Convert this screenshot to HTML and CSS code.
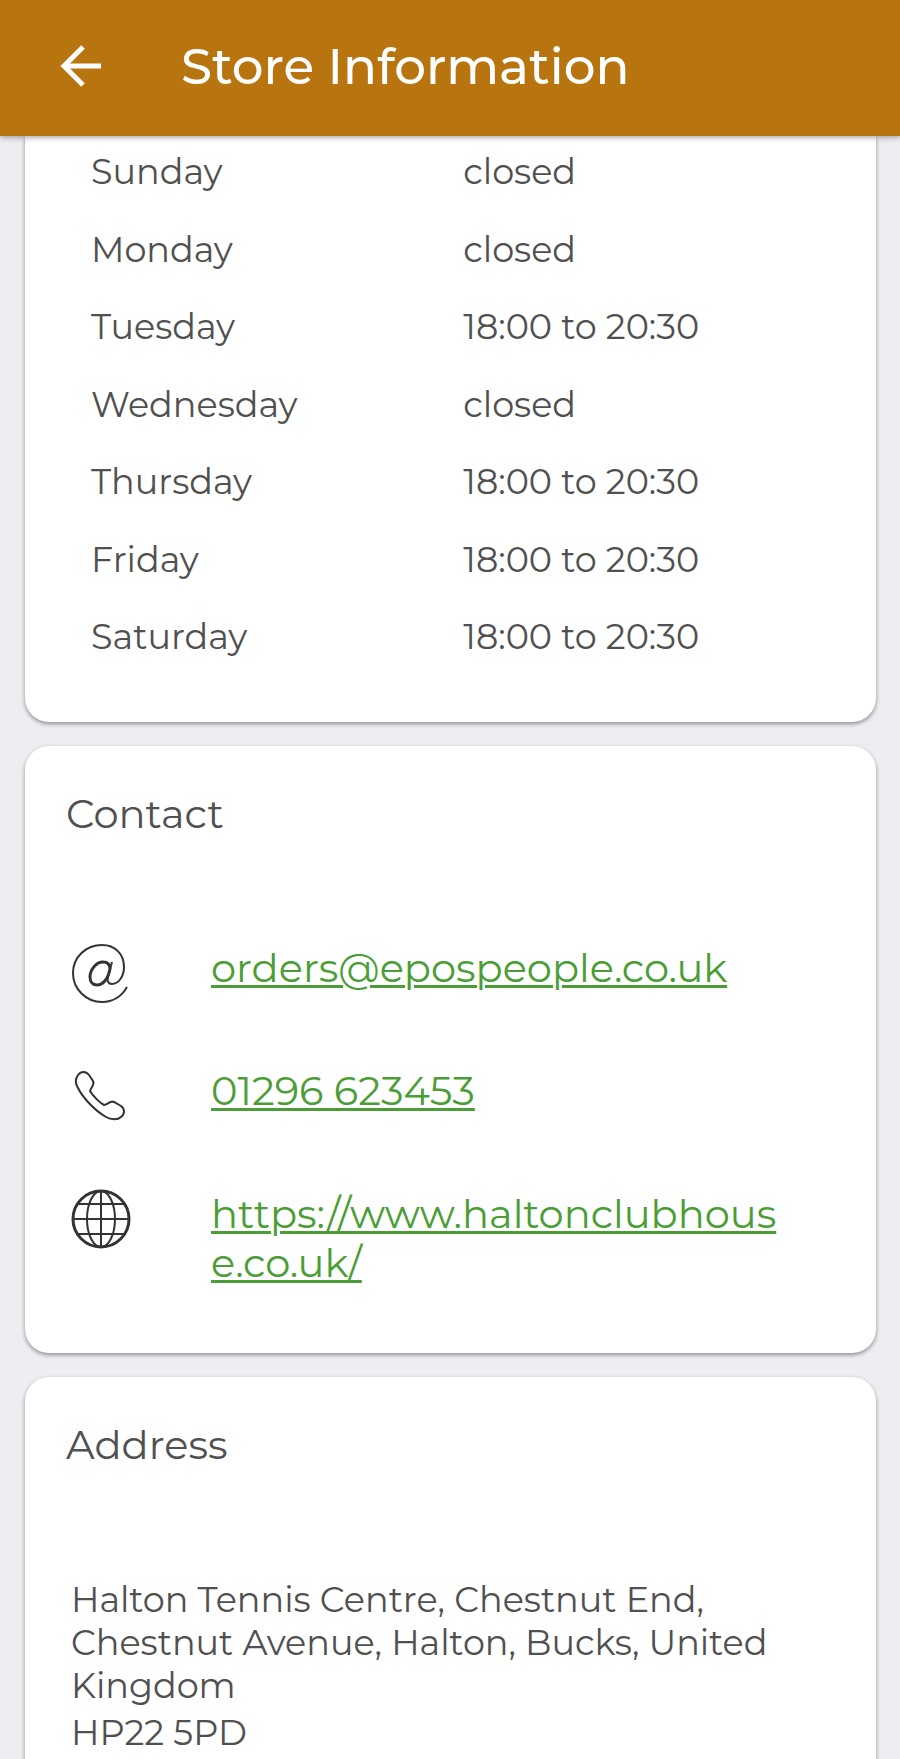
FILE: index.html
```html
<!DOCTYPE html>
<html lang="en">
<head>
    <meta charset="UTF-8">
    <meta name="viewport" content="width=device-width, initial-scale=1.0">
    <title>Store Information</title>
    <link rel="stylesheet" href="styles.css">
</head>
<body>

<header class="app-bar">
    <button class="back-button" type="button" aria-label="Back">
        <svg viewBox="0 0 44 44" width="44" height="44" fill="none" stroke="currentColor" stroke-width="5">
            <path d="M42 22H5M24 3L5 22l19 19"/>
        </svg>
    </button>
    <h1>Store Information</h1>
</header>

<main class="cards">
    <section class="card card-hours">
        <table class="hours">
            <tr><th scope="row">Sunday</th><td>closed</td></tr>
            <tr><th scope="row">Monday</th><td>closed</td></tr>
            <tr><th scope="row">Tuesday</th><td>18:00 to 20:30</td></tr>
            <tr><th scope="row">Wednesday</th><td>closed</td></tr>
            <tr><th scope="row">Thursday</th><td>18:00 to 20:30</td></tr>
            <tr><th scope="row">Friday</th><td>18:00 to 20:30</td></tr>
            <tr><th scope="row">Saturday</th><td>18:00 to 20:30</td></tr>
        </table>
    </section>

    <section class="card card-contact">
        <h2>Contact</h2>
        <ul class="contact-list">
            <li>
                <svg class="icon" viewBox="0 0 60 60" fill="none" stroke="currentColor" stroke-width="2">
                    <path d="M56 44C51 53 42 59 31 59C15 59 2 46 2 30C2 14 15 2 31 2C44 2 53 11 53 24C53 34 47 41 41 41C37 41 36 38 37 34L41 19"/>
                    <path stroke-width="3" d="M39 26C39 21 36 19 32 19C25 19 19 27 19 34C19 39 22 42 26 42C32 42 37 36 39 26"/>
                </svg>
                <a href="mailto:orders@epospeople.co.uk">orders@epospeople.co.uk</a>
            </li>
            <li>
                <svg class="icon" viewBox="0 0 60 60" fill="none" stroke="currentColor" stroke-width="2">
                    <path d="M7 9C10 5 15 5 18 9L22 15C24 19 20 21 19 25C22 30 29 37 33 39C37 39 39 34 43 36L50 40C54 43 54 48 50 51C47 54 40 54 35 51C23 44 11 31 6 20C4 16 5 12 7 9Z"/>
                </svg>
                <a href="tel:01296623453">01296 623453</a>
            </li>
            <li>
                <svg class="icon" viewBox="0 0 60 60" fill="none" stroke="currentColor" stroke-width="2">
                    <circle cx="30" cy="30" r="28" stroke-width="3"/>
                    <ellipse cx="30" cy="30" rx="14" ry="28"/>
                    <path d="M30 2V58M2 30H58M7 15H53M7 45H53"/>
                </svg>
                <a href="https://www.haltonclubhouse.co.uk/">https://www.haltonclubhouse.co.uk/</a>
            </li>
        </ul>
    </section>

    <section class="card card-address">
        <h2>Address</h2>
        <address>
            <p>Halton Tennis Centre, Chestnut End, Chestnut Avenue, Halton, Bucks, United Kingdom</p>
            <p>HP22 5PD</p>
        </address>
    </section>
</main>

</body>
</html>
```

FILE: styles.css
```css
* {
    box-sizing: border-box;
}
body {
    margin: 0;
    background-color: #eeedf2;
    color: #505050;
    font-family: Montserrat, Inter, sans-serif;
    font-size: 35px;
}
h1, h2, p, ul {
    margin: 0;
    padding: 0;
    font-weight: 400;
}
.app-bar {
    position: sticky;
    top: 0;
    display: flex;
    align-items: center;
    gap: 78px;
    height: 136px;
    padding: 0 59px 4px;
    background-color: #b8740f;
    color: #fff;
    box-shadow: 0 1px 6px rgba(0, 0, 0, 0.4);
}
.app-bar h1 {
    font-size: 50px;
    font-weight: 500;
}
.back-button {
    display: flex;
    padding: 0;
    border: none;
    background: none;
    color: inherit;
    cursor: pointer;
}
.cards {
    display: flex;
    flex-direction: column;
    gap: 24px;
    padding: 0 24px 0 25px;
}
.card {
    background-color: #fff;
    border-radius: 24px;
    box-shadow: 0 2px 4px rgba(0, 0, 0, 0.4);
}
.card h2 {
    padding: 40px 41px;
    font-size: 40px;
    line-height: 56px;
}
.card-hours {
    padding: 0 69px 47px 66px;
    border-top-left-radius: 0;
    border-top-right-radius: 0;
}
/* pulled up a little so the first row sits right under the app bar */
.hours {
    width: 100%;
    margin-top: -3px;
    border-collapse: collapse;
    table-layout: fixed;
}
.hours th, .hours td {
    height: 77px;
    padding: 0;
    font-weight: 400;
    text-align: left;
}
.hours tr:nth-child(even) th {
    height: 78px;
}
.hours th {
    width: 52%;
}
.contact-list {
    display: flex;
    flex-direction: column;
    gap: 74px;
    padding: 61px 90px 66px 46px;
    list-style: none;
    font-size: 40px;
    line-height: 49px;
}
.contact-list li {
    display: flex;
    gap: 80px;
}
.contact-list a {
    color: #4b9d35;
    text-decoration-thickness: 3px;
    text-underline-offset: 3px;
    word-break: break-all;
}
.icon {
    flex: none;
    width: 60px;
    height: 60px;
    margin-bottom: -11px;
    color: #333;
}
.card-address {
    border-bottom-left-radius: 0;
    border-bottom-right-radius: 0;
}
address {
    display: grid;
    gap: 4px;
    padding: 65px 70px 72px 46px;
    font-style: normal;
    line-height: 43px;
}
```
